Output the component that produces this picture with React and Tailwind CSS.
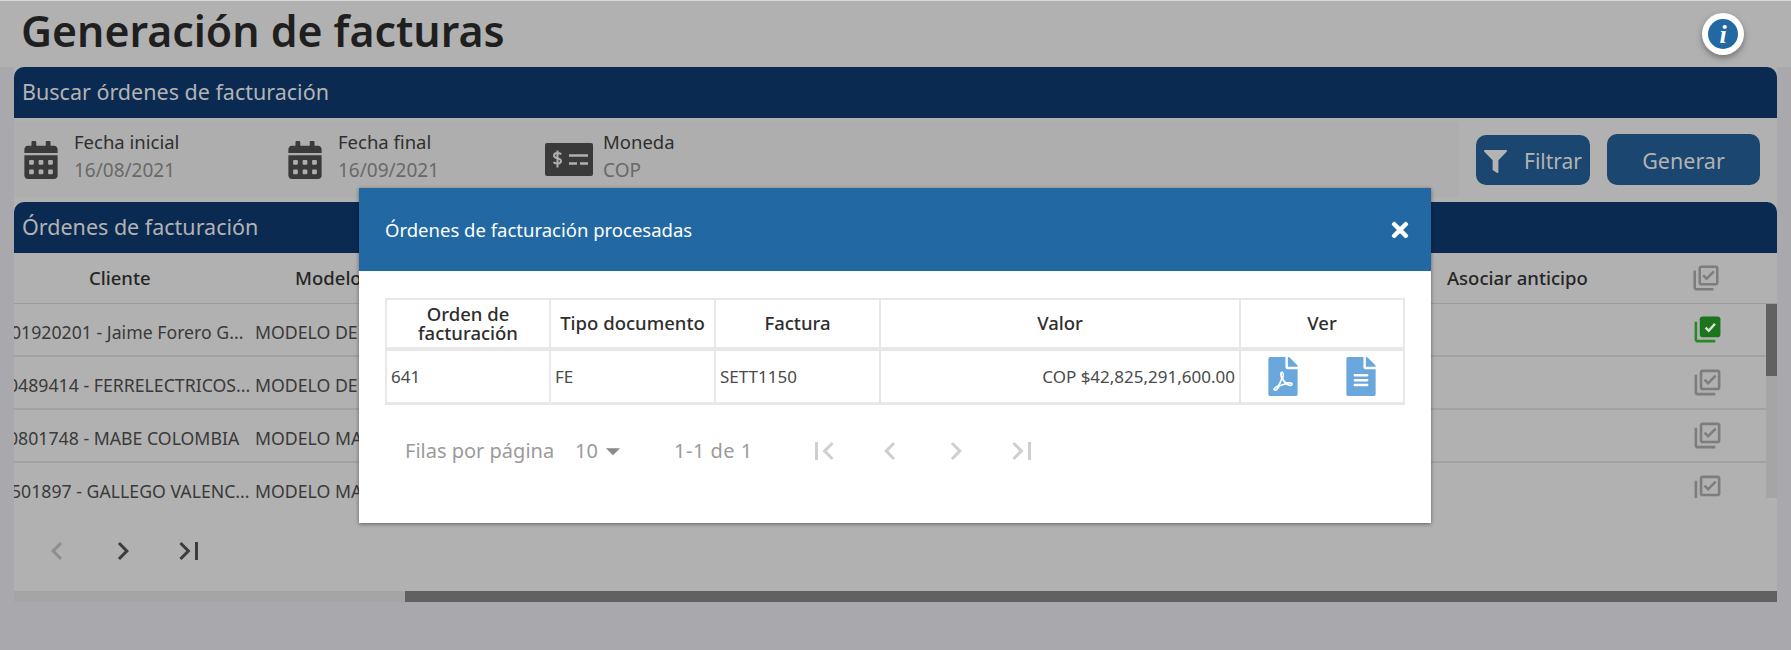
import React from 'react';
import { FaCalendarAlt, FaFilter, FaTimes, FaFilePdf, FaFileAlt } from 'react-icons/fa';
import {
    MdOutlineLibraryAddCheck,
    MdChevronLeft,
    MdChevronRight,
    MdFirstPage,
    MdLastPage,
    MdArrowDropDown,
} from 'react-icons/md';

const rows = [
    { client: '01920201 - Jaime Forero G...', offset: '-ml-[3px]', model: 'MODELO DE', selected: true },
    { client: '0489414 - FERRELECTRICOS...', offset: '-ml-[6px]', model: 'MODELO DE' },
    { client: '0801748 - MABE COLOMBIA', offset: '-ml-[6px]', model: 'MODELO MA' },
    { client: '501897 - GALLEGO VALENC...', offset: '-ml-[3px]', model: 'MODELO MA' },
];

function MoneyIcon() {
    return (
        <svg viewBox="0 0 48 33" className="w-[48px] h-[33px] shrink-0 mr-[10px]">
            <rect width="48" height="33" rx="2" fill="#3a3a3a" />
            <path d="M24 12.500h19M24 20.500h8M35 20.500h8" stroke="#b1b1b1" strokeWidth="2.4" fill="none" />
            <path d="M16 11.500c-1-2-7-2.200-7 1.200 0 3.300 7 1.800 7 5.300 0 3.400-6.200 3.200-7.400 1M12.500 7.500v17" stroke="#b1b1b1" strokeWidth="2" fill="none" />
        </svg>
    );
}

function SelectedCheck() {
    return (
        <svg viewBox="0 0 24 24" className="w-[31px] h-[31px] mr-[43px]">
            <path d="M4 6H2v14c0 1.100.9 2 2 2h14v-2H4V6z" fill="#258a25" />
            <path d="M20 2H8c-1.100 0-2 .9-2 2v12c0 1.100.9 2 2 2h12c1.100 0 2-.9 2-2V4c0-1.100-.9-2-2-2z" fill="#1c741c" />
            <path d="M10.500 10.500l2.500 2.500 4.800-5.500" stroke="#d8e4d8" strokeWidth="1.900" fill="none" />
        </svg>
    );
}

function FilterField({ icon, label, value, className }) {
    return (
        <div className={`flex items-center ${className}`}>
            {icon}
            <div className="flex flex-col -mt-[8px]">
                <span className="text-[18.5px] leading-[29px] text-[#2f2f2f]">{label}</span>
                <span className="text-[19px] leading-[29px] text-[#696969]">{value}</span>
            </div>
        </div>
    );
}

function SectionHeader({ children }) {
    return (
        <div className="h-[51px] bg-[#0b2a52] rounded-t-[10px] flex items-center pl-[8px] text-[21.500px] text-[#b3b3b3]">
            {children}
        </div>
    );
}

function OrdersTable() {
    return (
        <div className="flex-1 flex flex-col min-h-0">
            <div className="h-[51px] shrink-0 flex items-center border-b border-[#9c9c9c] text-[18.500px] font-medium text-[#262626]">
                <span className="w-[241px] pl-[75px]">Cliente</span>
                <span className="w-[1192px] pl-[40px]">Modelo</span>
                <span className="w-[244px]">Asociar anticipo</span>
                <MdOutlineLibraryAddCheck className="w-[30px] h-[30px] text-[#7d7d7d]" />
            </div>
            <div className="h-[194px] shrink-0 flex overflow-hidden">
                <div className="flex-1 min-w-0">
                    {rows.map((row) => (
                        <div key={row.client} className="h-[53px] flex items-center border-b-2 border-[#a2a2a2] text-[17.700px] text-[#3a3a3a]">
                            <div className="w-[241px] overflow-hidden whitespace-nowrap pt-[5px]">
                                <span className={`block ${row.offset}`}>{row.client}</span>
                            </div>
                            <span className="flex-1 whitespace-nowrap pt-[5px]">{row.model}</span>
                            {row.selected ? (
                                <SelectedCheck />
                            ) : (
                                <MdOutlineLibraryAddCheck className="w-[31px] h-[31px] text-[#7d7d7d] mr-[43px]" />
                            )}
                        </div>
                    ))}
                </div>
                <div className="w-[11px] bg-[#a5a5a5]">
                    <div className="h-[72px] bg-[#616161]" />
                </div>
            </div>
            <div className="h-[93px] shrink-0 flex items-center pl-[25px] pt-[12px] gap-[30px]">
                <MdChevronLeft className="w-[36px] h-[36px] text-[#8e8e8e]" />
                <MdChevronRight className="w-[36px] h-[36px] text-[#3c3c3c]" />
                <MdLastPage className="w-[36px] h-[36px] text-[#3c3c3c]" />
            </div>
            <div className="h-[11px] shrink-0 bg-[#a5a5a5] flex justify-end">
                <div className="w-[1372px] bg-[#616161]" />
            </div>
        </div>
    );
}

function ProcessedModal() {
    const th = 'flex items-center justify-center text-center text-[18.500px] leading-[19px] font-medium text-[#2e2e2e] border-l-2 border-[#e8e8e8] first:border-l-0 pb-[2px]';
    const td = 'flex items-center text-[17px] text-[#4a4a4a] border-l-2 border-[#e8e8e8] first:border-l-0 px-[4px]';
    return (
        <div className="absolute left-[359px] top-[187px] w-[1072px] h-[335px] bg-white shadow-[0_1px_4px_rgba(0,0,0,0.45)]">
            <div className="h-[83px] bg-[#2268a2] flex items-center justify-between pl-[26px] pr-[19px] text-white">
                <span className="text-[18.500px]">Órdenes de facturación procesadas</span>
                <FaTimes className="w-[24px] h-[24px]" />
            </div>
            <div className="mx-[26px] mt-[27px] w-[1020px] border-2 border-[#e8e8e8] border-b-[3px]">
                <div className="grid grid-cols-[162px_165px_165px_360px_164px] h-[51px] border-b-[4px] border-[#e8e8e8]">
                    <div className={th}>Orden de<br />facturación</div>
                    <div className={th}>Tipo documento</div>
                    <div className={th}>Factura</div>
                    <div className={th}>Valor</div>
                    <div className={th}>Ver</div>
                </div>
                <div className="grid grid-cols-[162px_165px_165px_360px_164px] h-[51px]">
                    <div className={td}>641</div>
                    <div className={td}>FE</div>
                    <div className={td}>SETT1150</div>
                    <div className={`${td} justify-end`}>COP $42,825,291,600.00</div>
                    <div className={`${td} justify-between pl-[27px] pr-[27px]`}>
                        <FaFilePdf className="w-[30px] h-[39px] text-[#6aa7dc]" />
                        <FaFileAlt className="w-[30px] h-[39px] text-[#6aa7dc]" />
                    </div>
                </div>
            </div>
            <div className="flex items-center h-[40px] mt-[26px] pl-[46px] text-[20px] text-[#9b9b9b]">
                <span className="w-[170px]">Filas por página</span>
                <span className="w-[30px]">10</span>
                <MdArrowDropDown className="w-[34px] h-[34px] text-[#8a8a8a] -ml-[9px]" />
                <span className="ml-[44px] w-[132px] tracking-[0.5px]">1-1 de 1</span>
                <div className="flex items-center gap-[30px] text-[#cfcfcf]">
                    <MdFirstPage className="w-[36px] h-[36px]" />
                    <MdChevronLeft className="w-[36px] h-[36px]" />
                    <MdChevronRight className="w-[36px] h-[36px]" />
                    <MdLastPage className="w-[36px] h-[36px]" />
                </div>
            </div>
        </div>
    );
}

export default function App() {
    return (
        <div className="relative w-[1791px] h-[650px] overflow-hidden bg-[#a9a8ad] border-t border-[#d8d8d8] font-['Noto_Sans','Open_Sans',sans-serif]">
            <header className="h-[66px] bg-[#b1b1b1] flex items-center justify-between pl-[21px] pr-[47px]">
                <h1 className="text-[42.800px] font-semibold text-[#1f1f1f] leading-none pb-[6px]">Generación de facturas</h1>
                <div className="w-[42px] h-[42px] rounded-full bg-white flex items-center justify-center shadow-[0_3px_6px_rgba(0,0,0,0.35)]">
                    <div className="w-[30px] h-[30px] rounded-full bg-[#2268a2] flex items-center justify-center text-white text-[26px] font-bold italic font-['Liberation_Serif',serif]">
                        i
                    </div>
                </div>
            </header>

            <main className="mx-[14px] h-[535px] flex flex-col bg-[#b1b1b1]">
                <SectionHeader>Buscar órdenes de facturación</SectionHeader>
                <div className="h-[84px] shrink-0 flex pt-[4px]">
                    <div className="w-[1445px] h-[75px] bg-[#aeaeae] flex items-center pl-[10px]">
                        <FilterField
                            className="w-[264px]"
                            label="Fecha inicial"
                            value="16/08/2021"
                            icon={<FaCalendarAlt className="w-[34px] h-[38px] mr-[16px] text-[#3a3a3a]" />}
                        />
                        <FilterField
                            className="w-[257px]"
                            label="Fecha final"
                            value="16/09/2021"
                            icon={<FaCalendarAlt className="w-[34px] h-[38px] mr-[16px] text-[#3a3a3a]" />}
                        />
                        <FilterField label="Moneda" value="COP" icon={<MoneyIcon />} />
                    </div>
                    <div className="flex items-start pt-[12px] pl-[17px] gap-[17px]">
                        <button className="w-[114px] h-[50px] mt-[1px] pt-[3px] rounded-[10px] bg-[#1a4670] flex items-center pl-[8px] text-[21px] text-[#b3b3b3]">
                            <FaFilter className="w-[23px] h-[23px] mr-[17px]" />
                            Filtrar
                        </button>
                        <button className="w-[153px] h-[51px] pt-[3px] rounded-[10px] bg-[#1a4670] text-[21.500px] text-[#b3b3b3]">Generar</button>
                    </div>
                </div>
                <SectionHeader>Órdenes de facturación</SectionHeader>
                <OrdersTable />
            </main>

            <ProcessedModal />
        </div>
    );
}
